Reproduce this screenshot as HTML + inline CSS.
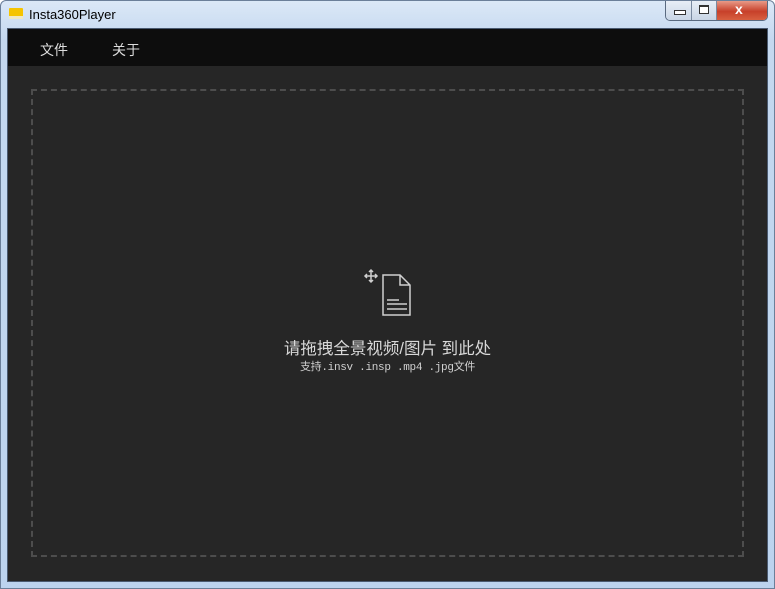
<!DOCTYPE html>
<html><head><meta charset="utf-8"><style>
html,body{margin:0;padding:0;width:775px;height:589px;overflow:hidden;background:#fff}
.win{position:absolute;left:0;top:0;width:773px;height:587px;border:1px solid #6b7f99;border-radius:6px 6px 0 0;background:linear-gradient(#dbe8f7,#c4d8ef 40px,#bcd3ee);}
.title{position:absolute;left:28px;top:6px;font:13px "Liberation Sans",sans-serif;color:#000}
.ico{position:absolute;left:8px;top:7px;width:14px;height:11px;background:#f5c400;border-radius:1px}
.ico:after{content:"";position:absolute;left:0;bottom:0;width:14px;height:3px;background:#f0e8c0}
.btns{position:absolute;left:664px;top:0;height:19px;width:101px;border:1px solid #5a6a80;border-top:none;border-radius:0 0 5px 5px;overflow:hidden;display:flex}
.b{height:19px;background:linear-gradient(#e8eef6,#c9d6e6);border-right:1px solid #7a8aa0;position:relative}
.x{background:linear-gradient(#e89a88,#c7402a 55%,#d86040);flex:1;position:relative}
.client{position:absolute;left:6px;top:27px;width:759px;height:552px;background:#262626;border:1px solid #4a5a70}
.menu{position:absolute;left:0;top:0;width:759px;height:37px;background:#0d0d0d;font:14px "Liberation Sans","Noto Sans CJK SC",sans-serif;color:#ddd}
.menu span{position:absolute;top:11px}
.dash{position:absolute;left:23px;top:60px;width:709px;height:464px;border:2px dashed #4d4d4d}
.t1{position:absolute;left:0;width:759px;top:306px;text-align:center;font:16.5px "Liberation Sans","Noto Sans CJK SC",sans-serif;color:#d8d8d8}
.t2{position:absolute;left:0;width:759px;top:329px;text-align:center;font:11px "Liberation Mono","Noto Sans CJK SC",monospace;color:#d0d0d0;letter-spacing:-0.3px}
</style></head><body>
<div class="win">
<div class="ico"></div>
<div class="title">Insta360Player</div>
<div class="btns">
<div class="b" style="width:25px"><div style="position:absolute;left:8px;top:9px;width:10px;height:3px;border:1px solid #333;background:#fff"></div></div>
<div class="b" style="width:24px"><div style="position:absolute;left:7px;top:4px;width:8px;height:6px;border:1px solid #333;border-top-width:2px;background:#fff"></div></div>
<div class="x"><div style="position:absolute;left:18px;top:0px;font:bold 14px 'Liberation Sans',sans-serif;color:#fff">x</div></div>
</div>
<div class="client">
<div class="menu"><span style="left:32px">文件</span><span style="left:104px">关于</span></div>
<div class="dash"></div>
<svg style="position:absolute;left:353px;top:239px" width="52" height="50" viewBox="0 0 52 50" fill="none" stroke="#cfcfcf" stroke-width="1.5">
<path d="M10 2v12M4 8h12M8 4l2-2 2 2M8 12l2 2 2-2M6 6l-2 2 2 2M14 6l2 2-2 2"/>
<path d="M22 7h17l10 10v30H22z M39 7v10h10"/>
<path d="M26 32h12M26 36h20M26 41h20"/>
</svg>
<div class="t1">请拖拽全景视频/图片 到此处</div>
<div class="t2">支持.insv .insp .mp4 .jpg文件</div>
</div>
</div>
</body></html>
